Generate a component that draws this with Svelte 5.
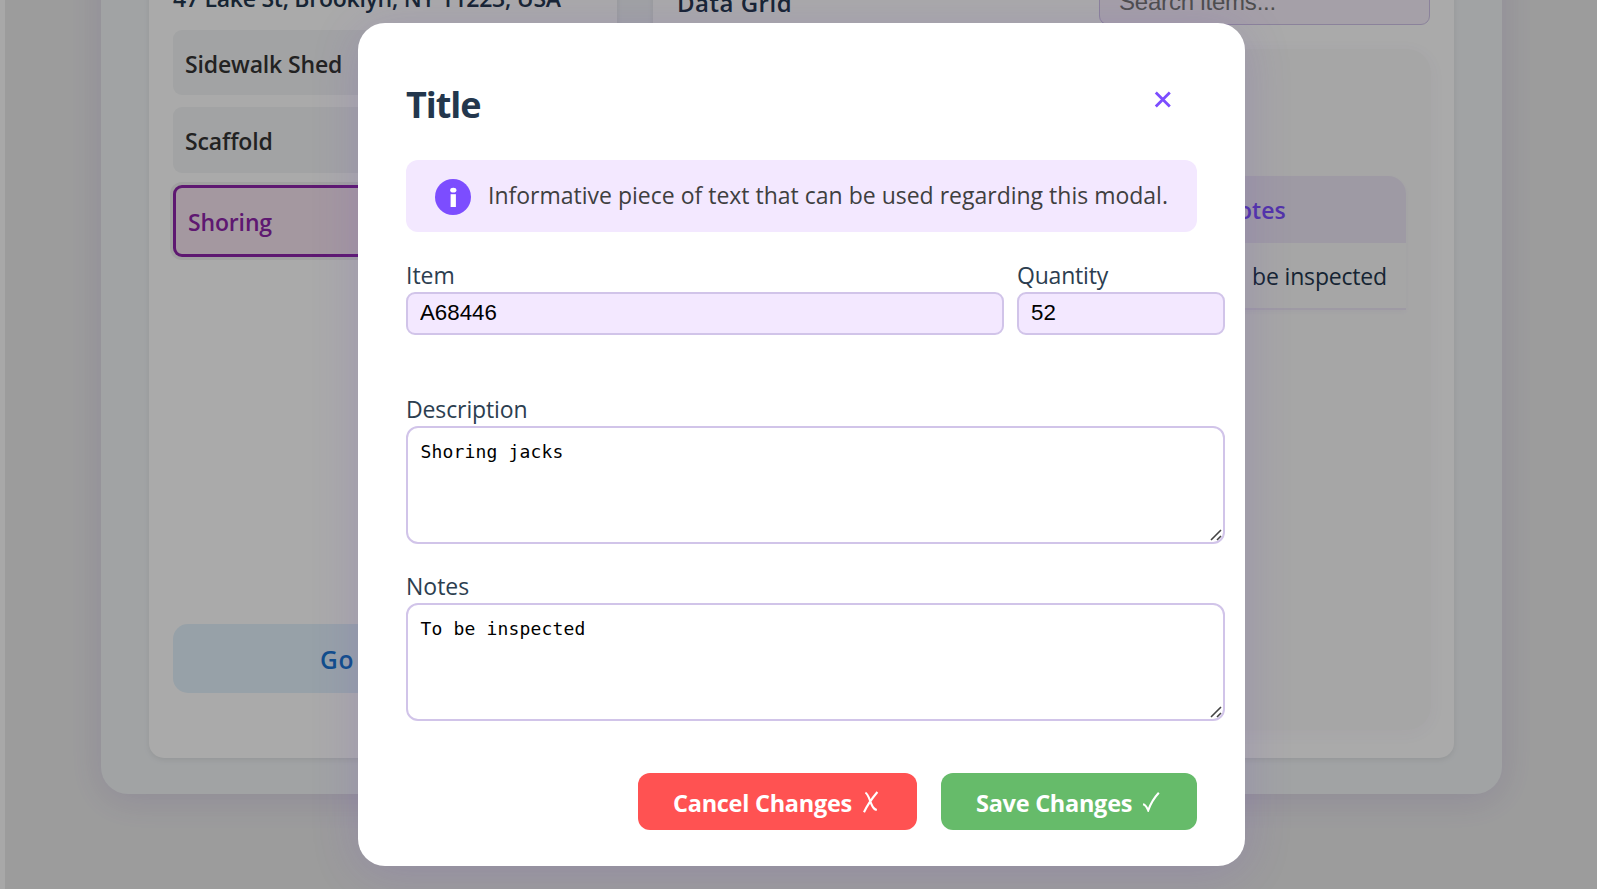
<script>
  let item = $state('A68446');
  let quantity = $state('52');
  let description = $state('Shoring jacks');
  let notes = $state('To be inspected');

  const categories = [
    { name: 'Sidewalk Shed', active: false },
    { name: 'Scaffold', active: false },
    { name: 'Shoring', active: true }
  ];
</script>

{#snippet grip()}
  <svg class="grip" width="12" height="12" viewBox="0 0 12 12" aria-hidden="true">
    <path d="M1 11 L11 1 M7 11 L11 7" stroke="#444" stroke-width="1.6" fill="none" />
  </svg>
{/snippet}

<div class="screen">
  <div class="page">
    <div class="container">
      <section class="panel side">
        <h3 class="address">47 Lake St, Brooklyn, NY 11223, USA</h3>
        <ul class="list">
          {#each categories as c}
            <li class="entry" class:active={c.active}><span>{c.name}</span></li>
          {/each}
        </ul>
        <button class="go">Go</button>
      </section>
      <section class="panel main">
        <header class="main-head">
          <h3>Data Grid</h3>
          <input class="search" placeholder="Search items..." />
        </header>
        <div class="grid-wrap">
          <div class="table">
            <div class="th"><span>Notes</span></div>
            <div class="td"><span><span class="to">To</span> be inspected</span></div>
          </div>
        </div>
      </section>
    </div>
  </div>

  <div class="overlay">
    <div class="modal">
      <header class="modal-head">
        <h2>Title</h2>
        <button class="close" aria-label="Close">
          <svg width="18" height="18" viewBox="0 0 18 18"><path d="M1.8 1.6 L15.8 15.6 M15.8 1.6 L1.8 15.6" stroke="#7c4dff" stroke-width="2.8" /></svg>
        </button>
      </header>

      <div class="info">
        <svg class="info-icon" width="36" height="36" viewBox="0 0 36 36" aria-hidden="true">
          <circle cx="18" cy="18" r="18" fill="#7c4dff" />
          <ellipse cx="18.3" cy="11.2" rx="3.1" ry="2.4" fill="#fff" />
          <rect x="15.6" y="15.2" width="5.3" height="12.8" fill="#fff" />
        </svg>
        <p>Informative piece of text that can be used regarding this modal.</p>
      </div>

      <div class="row">
        <label class="field item"><span>Item</span><input bind:value={item} /></label>
        <label class="field qty"><span class="q">Quantity</span><input bind:value={quantity} /></label>
      </div>

      <label class="field area first">
        <span class="d">Description</span>
        <div class="area-box"><textarea bind:value={description}></textarea>{@render grip()}</div>
      </label>
      <label class="field area">
        <span>Notes</span>
        <div class="area-box"><textarea bind:value={notes}></textarea>{@render grip()}</div>
      </label>

      <footer class="actions">
        <button class="cancel">
          <span>Cancel Changes</span>
          <svg width="16" height="22" viewBox="0 0 16 22"><path d="M2.4 1.6 C5.2 2.8 6.6 9 8.6 13.5 C10 17 11.6 18.5 13.8 19 M14.4 1 C10.2 6 4.6 13.5 1 21.2" stroke="#fff" stroke-width="2.1" fill="none" /></svg>
        </button>
        <button class="save">
          <span>Save Changes</span>
          <svg width="18" height="20" viewBox="0 0 18 20"><path d="M1 12.2 C3.2 12.5 4.6 14.5 6.2 18.4 C8.5 12 12 6 16.8 0.8" stroke="#fff" stroke-width="2.1" fill="none" /></svg>
        </button>
      </footer>
    </div>
  </div>
</div>

<style>
  :global(body) { margin: 0; }
  .screen, .screen * { box-sizing: border-box; }
  .screen {
    width: 1597px;
    height: 889px;
    overflow: hidden;
    display: grid;
    background: #fff;
    font-family: "Open Sans", "Noto Sans", sans-serif;
    color: #23374d;
  }
  .page, .overlay { grid-area: 1 / 1; min-width: 0; min-height: 0; }
  h2, h3, p, ul { margin: 0; padding: 0; }
  button { border: 0; font-family: inherit; cursor: pointer; }

  .page {
    background: #ebebeb;
    border-left: 5px solid #fcfcfc;
    height: 889px;
    overflow: hidden;
  }
  .container {
    margin: -120px 95px 0 96px;
    height: 914px;
    padding: 36px 48px;
    display: flex;
    gap: 36px;
    background: #f2f5f7;
    border-radius: 27px;
    box-shadow: 0 6px 36px rgba(94, 53, 177, 0.14);
  }
  .panel {
    background: #fff;
    border-radius: 15px;
    box-shadow: 0 2px 6px rgba(0, 0, 0, 0.08);
  }
  .side {
    width: 468px;
    flex: none;
    padding: 66px 24px 0;
    display: flex;
    flex-direction: column;
  }
  .address {
    height: 48px;
    line-height: 32px;
    font-size: 23px;
    font-weight: 600;
    letter-spacing: -0.26px;
    white-space: nowrap;
  }
  .list { list-style: none; display: flex; flex-direction: column; gap: 12px; }
  .entry {
    height: 65.33px;
    padding: 2px 12px 0;
    display: flex;
    align-items: center;
    background: #f3f5f6;
    border-radius: 9px;
    color: #333;
    font-size: 23px;
    font-weight: 600;
    letter-spacing: -0.15px;
  }
  .entry.active {
    height: 72px;
    border: 3px solid #8e24aa;
    background: #f6e5f1;
    color: #8e24aa;
    box-shadow: 0 0 0 3px #f0f1f0;
  }
  .go {
    margin-top: 367px;
    height: 69px;
    padding: 2px 0 0 147px;
    text-align: left;
    background: #e3f2fd;
    border-radius: 15px;
    color: #1976d2;
    font-size: 24.5px;
    font-weight: 600;
    letter-spacing: 0.6px;
  }

  .main { flex: 1; padding: 60px 23px 28px 24px; display: flex; flex-direction: column; }
  .main-head { display: flex; justify-content: space-between; height: 73px; padding: 4px 1px 0 0; }
  .main-head h3 { font-size: 24px; line-height: 32px; margin-top: 7px; font-weight: 600; letter-spacing: 0.5px; }
  .search {
    width: 331px;
    height: 45px;
    padding: 0 19px 2px;
    border: 1.5px solid #d1c4e9;
    border-radius: 9px;
    background: #f8f1fc;
    font: 24px "Liberation Sans", Arial, sans-serif;
    letter-spacing: -0.2px;
  }
  .search::placeholder { color: #757575; }
  .grid-wrap {
    flex: 1;
    padding: 127px 25px 0;
    background: #fafafa;
    border-radius: 24px;
    box-shadow: 0 3px 18px rgba(94, 53, 177, 0.04);
  }
  .table { border-radius: 18px 18px 0 0; overflow: hidden; box-shadow: 0 2px 6px rgba(94, 53, 177, 0.05); }
  .th, .td { display: flex; justify-content: flex-end; align-items: center; padding-right: 20px; font-size: 23px; white-space: nowrap; }
  .th { height: 67px; background: #ede7f6; color: #7c4dff; font-weight: 600; }
  .th > span { width: 166px; }
  .td { height: 67px; padding-right: 19px; border-bottom: 2px solid #ede7f6; background: #fafafa; letter-spacing: -0.18px; }
  .to { margin-right: 4px; }

  .overlay {
    z-index: 1;
    height: 889px;
    display: flex;
    justify-content: center;
    align-items: flex-start;
    padding: 23px 0 0 6px;
    background: rgba(0, 0, 0, 0.335);
  }
  .modal {
    width: 887px;
    height: 843px;
    padding: 57px 48px 36px;
    background: #fff;
    border-radius: 27px;
    box-shadow: 0 6px 48px rgba(104, 60, 200, 0.18);
  }
  .modal-head { display: flex; justify-content: space-between; height: 80px; }
  h2 { font-size: 36px; line-height: 50px; font-weight: 700; letter-spacing: -1.05px; }
  .close { width: 18px; height: 18px; padding: 0; margin: 11px 25px 0 0; background: none; }
  .close svg, .actions svg { display: block; }

  .info {
    height: 72px;
    display: flex;
    align-items: center;
    padding-left: 29px;
    gap: 17px;
    background: #f3e8ff;
    border-radius: 12px;
    color: #3f3f3f;
  }
  .info-icon { margin-top: 2px; flex: none; }
  .info p { font-size: 23px; line-height: 32px; white-space: nowrap; margin-top: -3px; }

  .row { display: flex; gap: 13px; width: 819px; margin-top: 27px; }
  .field { display: flex; flex-direction: column; }
  .field > span { height: 33px; line-height: 33px; font-size: 23px; color: #2c3e50; }
  .field > .q { letter-spacing: -0.2px; }
  .field > .d { letter-spacing: -0.12px; }
  .item { flex: 1; }
  .qty { width: 208px; }
  input, textarea { outline: 0; margin: 0; }
  .field input {
    width: 100%;
    height: 43px;
    padding: 0 12px 1px;
    border: 2px solid #d1c4e9;
    border-radius: 9px;
    background: #f3e8ff;
    color: #000;
    font: 22.3px "Liberation Sans", Arial, sans-serif;
  }
  .area { margin-top: 26px; width: 819px; }
  .area.first { margin-top: 58px; }
  .area-box { position: relative; height: 118px; }
  textarea {
    display: block;
    width: 100%;
    height: 118px;
    padding: 12px 12.5px;
    border: 2px solid #d1c4e9;
    border-radius: 12px;
    background: #fff;
    color: #000;
    resize: none;
    font: 18px/24px "DejaVu Sans Mono", monospace;
    letter-spacing: 0.16px;
  }
  .grip { position: absolute; right: 3px; bottom: 3px; }

  .actions { display: flex; justify-content: flex-end; gap: 24px; margin-top: 52px; }
  .actions button {
    height: 57px;
    display: flex;
    align-items: center;
    padding: 0 0 0 35px;
    border-radius: 12px;
    color: #fff;
    font-size: 23.5px;
    font-weight: 700;
    letter-spacing: -0.27px;
  }
  .actions span { margin-top: 2px; white-space: nowrap; text-align: left; width: 180px; }
  .actions .save span { width: 158px; }
  .cancel { width: 279px; background: #ff5252; gap: 10px; }
  .save { width: 256px; background: #66bb6a; gap: 8px; }
</style>
